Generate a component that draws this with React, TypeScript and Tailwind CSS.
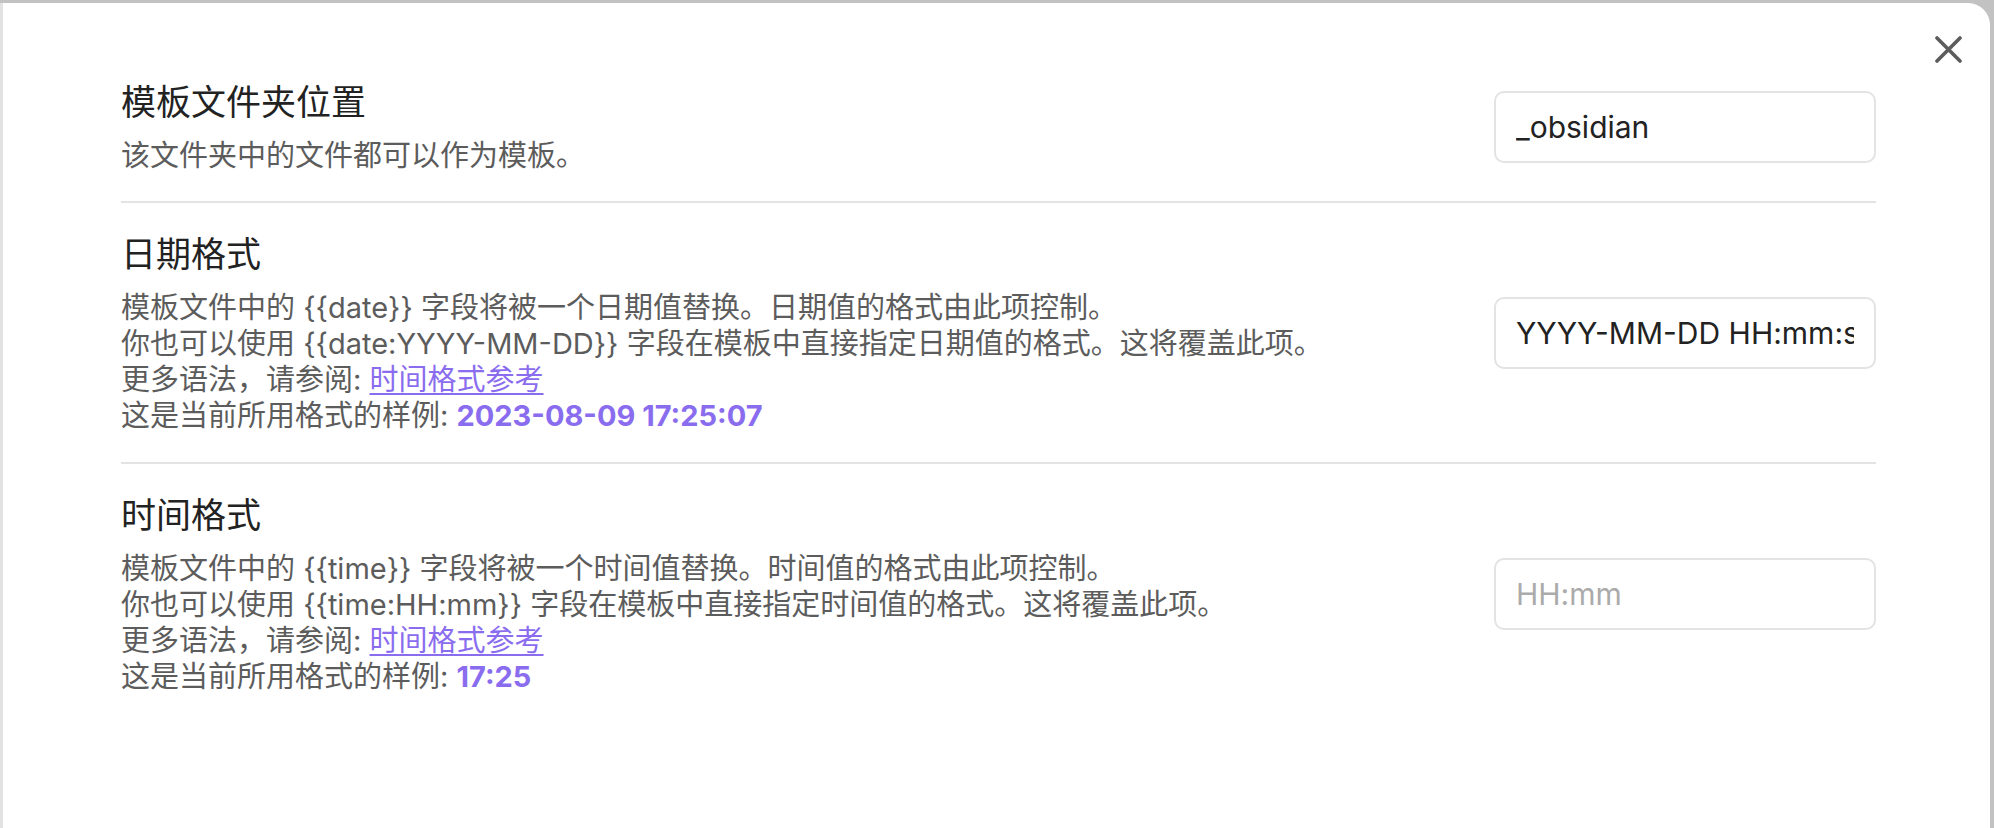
import React from 'react';

const fontStack = "font-['Inter','Noto_Sans_CJK_SC',sans-serif]";

type Setting = {
  name: string;
  lines: React.ReactNode[];
  value?: string;
  placeholder?: string;
};

const RefLink = () => (
  <a href="#" className="text-[#8a6cef] underline underline-offset-[3px] decoration-[1.5px]">
    时间格式参考
  </a>
);

const settings: Setting[] = [
  {
    name: '模板文件夹位置',
    lines: ['该文件夹中的文件都可以作为模板。'],
    value: '_obsidian',
  },
  {
    name: '日期格式',
    lines: [
      '模板文件中的 {{date}} 字段将被一个日期值替换。日期值的格式由此项控制。',
      '你也可以使用 {{date:YYYY-MM-DD}} 字段在模板中直接指定日期值的格式。这将覆盖此项。',
      <>更多语法，请参阅: <RefLink /></>,
      <>这是当前所用格式的样例: <span className="font-bold text-[#8a6cef]">2023-08-09 17:25:07</span></>,
    ],
    value: 'YYYY-MM-DD HH:mm:ss',
  },
  {
    name: '时间格式',
    lines: [
      '模板文件中的 {{time}} 字段将被一个时间值替换。时间值的格式由此项控制。',
      '你也可以使用 {{time:HH:mm}} 字段在模板中直接指定时间值的格式。这将覆盖此项。',
      <>更多语法，请参阅: <RefLink /></>,
      <>这是当前所用格式的样例: <span className="font-bold text-[#8a6cef]">17:25</span></>,
    ],
    placeholder: 'HH:mm',
  },
];

const SettingRow = ({ setting, first }: { setting: Setting; first: boolean }) => (
  <div
    className={`flex items-center justify-between ${
      first ? 'pt-[30px] pb-[27px]' : 'pt-[29px] pb-[28px] border-t-2 border-[#e3e3e3]'
    }`}
  >
    <div className="flex flex-col gap-[14px]">
      <div className="text-[35px] leading-[44px] text-[#222222]">{setting.name}</div>
      <div className="text-[29px] leading-[36px] text-[#5c5c5c]">
        {setting.lines.map((line, i) => (
          <div key={i}>{line}</div>
        ))}
      </div>
    </div>
    <input
      type="text"
      readOnly
      defaultValue={setting.value}
      placeholder={setting.placeholder}
      className={`w-[382px] h-[72px] shrink-0 rounded-[10px] border-2 border-[#e3e3e3] bg-white px-[20px] text-[30px] text-[#222222] placeholder:text-[#ababab] outline-none ${fontStack}`}
    />
  </div>
);

export default function App() {
  return (
    <div className={`w-[1994px] h-[828px] overflow-hidden bg-[#c2c2c2] pt-[3px] pr-[4px] ${fontStack}`}>
      <div className="relative h-full bg-white border-l-[3px] border-[#e2e2e2] rounded-tr-[22px] pt-[47px] pl-[118px] pr-[114px]">
        {/* Close button */}
        <button className="absolute top-[33px] right-[28px] w-[27px] h-[27px]">
          <svg viewBox="0 0 27 27" className="w-[27px] h-[27px]">
            <path d="M2 2 L25 25 M25 2 L2 25" stroke="#5c5c5c" strokeWidth="3.6" strokeLinecap="round" fill="none" />
          </svg>
        </button>

        <div className="flex flex-col">
          {settings.map((s, i) => (
            <SettingRow key={s.name} setting={s} first={i === 0} />
          ))}
        </div>
      </div>
    </div>
  );
}
